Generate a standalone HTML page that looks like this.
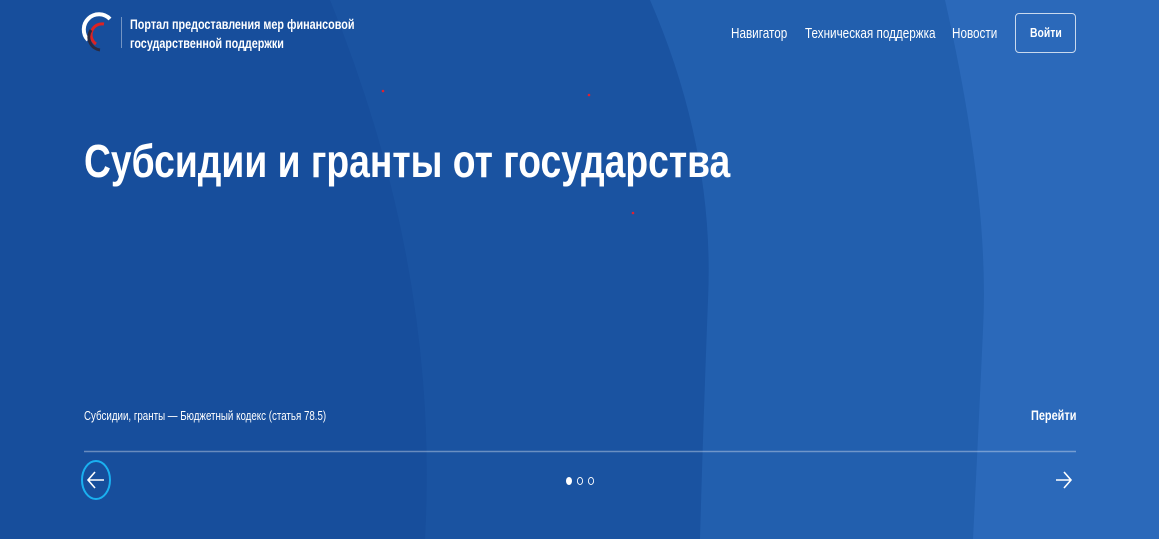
<!DOCTYPE html>
<html><head><meta charset="utf-8"><style>
*{margin:0;padding:0;box-sizing:border-box}
body{width:1159px;height:539px;overflow:hidden;background:#1a53a1;font-family:"Liberation Sans",sans-serif;color:#fff;position:relative}
svg.bg{position:absolute;left:0;top:0}
.abs{position:absolute;white-space:nowrap;transform-origin:0 0}
</style></head><body>
<svg class="bg" width="1159" height="539" viewBox="0 0 1159 539">
<rect width="1159" height="539" fill="#1a53a1"/>
<path d="M0 0 L330 0 Q440 270 425 539 L0 539 Z" fill="#174e9c"/>
<path d="M650 0 Q715 150 708 300 Q703 430 700 539 L1159 539 L1159 0 Z" fill="#225fae"/>
<path d="M945 0 Q990 200 983 330 Q978 440 973 539 L1159 539 L1159 0 Z" fill="#2b69ba"/>
<circle cx="383" cy="91" r="1.3" fill="#e02030"/>
<circle cx="589" cy="95" r="1.3" fill="#e02030"/>
<circle cx="633" cy="213" r="1.3" fill="#e02030"/>
<line x1="84" y1="451.5" x2="1076" y2="451.5" stroke="rgba(255,255,255,0.35)" stroke-width="1.5"/>
<path d="M110 19 A15 15 0 0 0 88 40" fill="none" stroke="#fff" stroke-width="4"/>
<path d="M104 24 A11 11 0 0 0 96 44" fill="none" stroke="#d22" stroke-width="3"/>
<path d="M91 30 A13 13 0 0 0 100 50" fill="none" stroke="#2a2a40" stroke-width="3"/>
<line x1="121.5" y1="17" x2="121.5" y2="48" stroke="rgba(255,255,255,0.4)"/>
<ellipse cx="96" cy="480" rx="14" ry="19" fill="none" stroke="#1ab0f0" stroke-width="2"/>
<path d="M104 480 H88 M95 472 L88 480 L95 488" fill="none" stroke="#fff" stroke-width="1.6"/>
<path d="M1056 480 H1071 M1064 472 L1071 480 L1064 488" fill="none" stroke="#fff" stroke-width="1.6"/>
<ellipse cx="569" cy="481" rx="3" ry="4" fill="#fff"/>
<ellipse cx="580" cy="481" rx="2.6" ry="3.6" fill="none" stroke="#fff" stroke-width="0.9"/>
<ellipse cx="591" cy="481" rx="2.6" ry="3.6" fill="none" stroke="#fff" stroke-width="0.9"/>
</svg>
<div class="abs" style="left:130px;top:15px;font-size:13.5px;font-weight:bold;line-height:19px;transform:scaleX(0.8)">Портал предоставления мер финансовой<br>государственной поддержки</div>
<div class="abs" style="left:731px;top:25px;font-size:15px;transform:scaleX(0.78)">Навигатор</div>
<div class="abs" style="left:805px;top:25px;font-size:15px;transform:scaleX(0.78)">Техническая поддержка</div>
<div class="abs" style="left:952px;top:25px;font-size:15px;transform:scaleX(0.78)">Новости</div>
<div class="abs" style="left:1015px;top:13px;width:61px;height:40px;border:1px solid rgba(255,255,255,0.75);border-radius:4px;font-size:13px;font-weight:bold;text-align:center;line-height:38px"><span style="display:inline-block;transform:scaleX(0.8)">Войти</span></div>
<div class="abs" style="left:84px;top:134px;font-size:46px;font-weight:bold;transform:scaleX(0.81)">Субсидии и гранты от государства</div>
<div class="abs" style="left:84px;top:408px;font-size:13px;transform:scaleX(0.75)">Субсидии, гранты — Бюджетный кодекс (статья 78.5)</div>
<div class="abs" style="left:1031px;top:407px;font-size:14px;font-weight:bold;transform:scaleX(0.78)">Перейти</div>
</body></html>
